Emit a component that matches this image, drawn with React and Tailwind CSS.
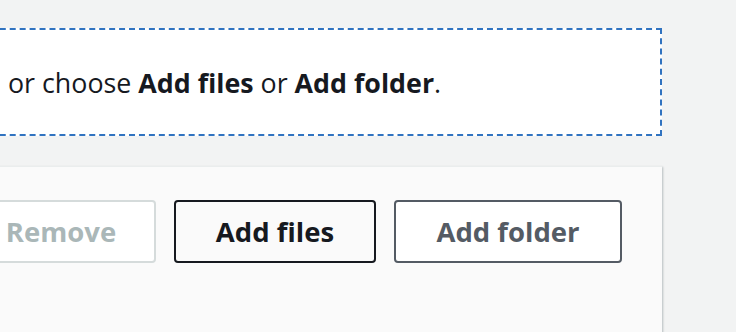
import React from 'react';

const btnBase =
    'h-[63px] shrink-0 rounded-[4px] border-2 text-[27.5px] font-bold leading-none flex items-center justify-center';

export default function App() {
    return (
        <div
            className="w-[736px] h-[332px] overflow-hidden bg-[#f2f3f3] pt-[28px] pr-[74px]"
            style={{ fontFamily: '"Open Sans", "Noto Sans", sans-serif' }}
        >
            {/* Drop zone */}
            <div className="ml-[-40px] h-[108px] border-2 border-dashed border-[#3173c0] bg-white flex items-center pl-[46px]">
                <p className="text-[26.8px] text-[#16191f] leading-none pt-[2px] whitespace-nowrap">
                    or choose <span className="font-bold">Add files</span> or{' '}
                    <span className="font-bold">Add folder</span>.
                </p>
            </div>

            {/* Actions panel */}
            <div className="ml-[-40px] mt-[30px] h-[200px] bg-[#fafafa] border-t border-[#eaeded] shadow-[1px_1px_2px_0_rgba(0,28,36,0.25)] flex justify-end items-start pt-[33px] pr-[40px] gap-[18px]">
                <button className={`${btnBase} w-[190px] bg-white border-[#d5dbdb] text-[#aab7b8]`}>
                    Remove
                </button>
                <button className={`${btnBase} w-[202px] bg-[#fafafa] border-[#16191f] text-[#16191f]`}>
                    Add files
                </button>
                <button className={`${btnBase} w-[228px] bg-white border-[#545b64] text-[#545b64]`}>
                    Add folder
                </button>
            </div>
        </div>
    );
}
